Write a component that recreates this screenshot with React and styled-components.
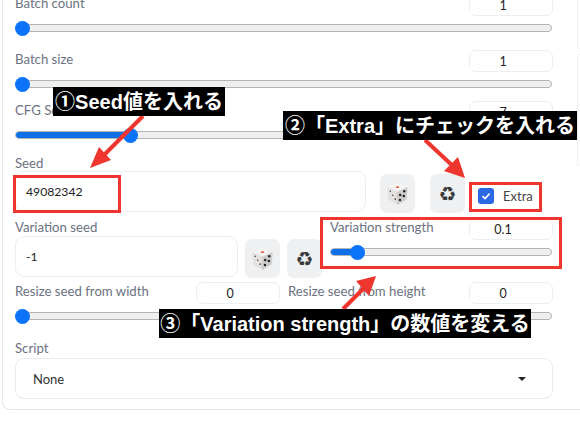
import React from 'react'
import styled, { createGlobalStyle } from 'styled-components'

const GlobalStyle = createGlobalStyle`
  * { box-sizing: border-box; }
  body {
    margin: 0;
    background: #fff;
    font-family: "Lato", "Noto Sans", sans-serif;
  }
`

const Page = styled.div`
  position: relative;
  width: 580px;
  height: 428px;
  overflow: hidden;
`
const Panel = styled.div`
  display: flex;
  margin: -10px 0 0 2px;
  height: 420px;
  padding: 4px 0 0 12px;
  border-left: 1px solid #e5e7eb;
  border-bottom: 1px solid #e5e7eb;
  border-bottom-left-radius: 8px;
`
const Main = styled.div`
  width: 538px;
  flex-shrink: 0;
`
const Side = styled.div`
  margin-left: 24px;
  flex: 1;
  display: flex;
  flex-direction: column;
  gap: 5px;
`
const SideCard = styled.div`
  height: ${p => p.$h}px;
  border: 1px solid #f0f1f3;
  border-radius: 6px 0 0 6px;
  border-right: 0;
`
const SliderHead = styled.div`
  display: flex;
  justify-content: space-between;
  align-items: flex-start;
  margin-top: ${p => p.$top || 0}px;
`
const Label = styled.div`
  margin-top: ${p => p.$top || 0}px;
  font-size: 13.2px;
  line-height: 18px;
  color: #6b7280;
  white-space: nowrap;
`
const NumberBox = styled.div`
  width: 84px;
  height: 22px;
  padding-right: 16px;
  border: 1px solid #eceef0;
  border-radius: 7px;
  background: #fff;
  text-align: center;
  font-size: 12.5px;
  line-height: 22px;
  color: #222;
`
const Track = styled.div`
  display: flex;
  height: 8px;
  margin: 8px 1px 0 0;
  border: 1px solid #b4b4b6;
  border-radius: 4px;
  background: #efeff0;
`
const Fill = styled.div`
  display: flex;
  justify-content: flex-end;
  align-items: center;
  min-width: 7px;
  height: 6px;
  border-radius: 3px;
  background: #0f6fe6;
`
const Thumb = styled.div`
  flex-shrink: 0;
  width: 15px;
  height: 15px;
  margin-right: -7px;
  border-radius: 50%;
  background: #0b74fb;
`
const TextBox = styled.div`
  width: ${p => p.$w}px;
  height: 41px;
  padding-left: 10px;
  border: 1px solid #eceef0;
  border-radius: 9px;
  font-size: 12.2px;
  line-height: 40px;
  color: #222;
`
const SeedRow = styled.div`
  display: flex;
  align-items: flex-start;
  margin-top: ${p => p.$top}px;
`
const IconButton = styled.div`
  display: flex;
  align-items: center;
  justify-content: center;
  flex-shrink: 0;
  width: 35px;
  height: 39px;
  margin-top: 3px;
  margin-left: ${p => p.$left}px;
  border-radius: 7px;
  background: #eff0f2;
  color: #3a3a3c;
  font-family: "DejaVu Sans", sans-serif;
  font-size: 20px;
`
const CheckWrap = styled.div`
  display: flex;
  align-items: center;
  height: 41px;
  margin-left: 13px;
  padding-top: 8px;
  font-size: 13px;
  color: #444;
`
const CheckBox = styled.div`
  display: flex;
  align-items: center;
  justify-content: center;
  width: 16px;
  height: 16px;
  margin-right: 9px;
  border-radius: 3px;
  background: #2a68e4;
`
const TwoCols = styled.div`
  display: grid;
  grid-template-columns: ${p => p.$cols};
  column-gap: 8px;
  margin-top: ${p => p.$top}px;
`
const Select = styled.div`
  display: flex;
  align-items: center;
  justify-content: space-between;
  height: 41px;
  margin-top: 1px;
  padding: 0 26px 0 17px;
  border: 1px solid #e9ebee;
  border-radius: 9px;
  font-size: 13px;
  color: #333;
`
const Caret = styled.div`
  width: 0;
  height: 0;
  border-left: 4px solid transparent;
  border-right: 4px solid transparent;
  border-top: 4px solid #222;
`
const Overlay = styled.svg`
  position: absolute;
  inset: 0;
`
const Callout = styled.div`
  position: absolute;
  left: ${p => p.$x}px;
  top: ${p => p.$y}px;
  width: ${p => p.$w}px;
  height: 29px;
  background: #000;
  color: #fff;
  font-family: "Liberation Sans", "Noto Sans CJK JP", sans-serif;
  font-size: 20px;
  font-weight: 700;
  line-height: 30px;
  white-space: nowrap;
  text-align: center;
`
const RedFrame = styled.div`
  position: absolute;
  left: ${p => p.$x}px;
  top: ${p => p.$y}px;
  width: ${p => p.$w}px;
  height: ${p => p.$h}px;
  border: 3px solid #ee352e;
`

const Dice = () => (
  <svg width="27" height="27" viewBox="0 0 24 24">
    <g strokeLinejoin="round" strokeWidth="1.2">
      <path d="M12 3 L20.5 7 L12 11 L3.5 7 Z" fill="#f6f4f2" stroke="#f6f4f2" />
      <path d="M3.5 7 L12 11 L12 21.5 L4.5 17 Z" fill="#e4e2e0" stroke="#e4e2e0" />
      <path d="M20.5 7 L12 11 L12 21.5 L19.5 17 Z" fill="#cfcdcb" stroke="#cfcdcb" />
    </g>
    <ellipse cx="12" cy="6.4" rx="1.6" ry="0.8" fill="#e8604c" />
    <circle cx="5.6" cy="10" r="0.7" fill="#444" />
    <circle cx="7.8" cy="13.5" r="0.7" fill="#444" />
    <circle cx="10" cy="17" r="0.7" fill="#444" />
    <circle cx="18" cy="10" r="1.1" fill="#222" />
    <circle cx="17.6" cy="14.2" r="1.1" fill="#222" />
    <circle cx="14.4" cy="13.4" r="1.1" fill="#222" />
    <circle cx="14.2" cy="17.8" r="1.1" fill="#222" />
  </svg>
)

const Slider = ({ percent }) => (
  <Track>
    <Fill style={{ width: `${percent}%` }}>
      <Thumb />
    </Fill>
  </Track>
)

const SliderField = ({ label, value, percent, top }) => (
  <div>
    <SliderHead $top={top}>
      <Label>{label}</Label>
      <NumberBox>{value}</NumberBox>
    </SliderHead>
    <Slider percent={percent} />
  </div>
)

const App = () => {
  return (
    <Page>
      <GlobalStyle />
      <Panel>
        <Main>
          <SliderField label="Batch count" value="1" percent={0} />
          <SliderField label="Batch size" value="1" percent={0} top={18} />
          <SliderField label="CFG Scale" value="7" percent={21.5} top={13} />

          <Label $top={15}>Seed</Label>
          <SeedRow $top={-1}>
            <TextBox $w={351}>49082342</TextBox>
            <IconButton $left={14}><Dice /></IconButton>
            <IconButton $left={15}>♻</IconButton>
            <CheckWrap>
              <CheckBox>
                <svg width="10" height="10" viewBox="0 0 10 10">
                  <path d="M1.5 5.2 L4 7.6 L8.6 2.6" fill="none" stroke="#fff" strokeWidth="1.6" />
                </svg>
              </CheckBox>
              Extra
            </CheckWrap>
          </SeedRow>

          <TwoCols $cols="307px 223px" $top={5}>
            <div>
              <Label>Variation seed</Label>
              <SeedRow $top={0}>
                <TextBox $w={223}>-1</TextBox>
                <IconButton $left={7}><Dice /></IconButton>
                <IconButton $left={7}>♻</IconButton>
              </SeedRow>
            </div>
            <SliderField label="Variation strength" value="0.1" percent={12.2} />
          </TwoCols>

          <TwoCols $cols="265px 265px" $top={4}>
            <SliderField label="Resize seed from width" value="0" percent={0} />
            <SliderField label="Resize seed from height" value="0" percent={0} />
          </TwoCols>

          <Label $top={19}>Script</Label>
          <Select>
            None
            <Caret />
          </Select>
        </Main>
        <Side>
          <SideCard $h={55} />
          <SideCard $h={112} />
        </Side>
      </Panel>

      <Overlay width="580" height="428" viewBox="0 0 580 428">
        <g stroke="#ee352e" strokeWidth="4">
          <line x1="143" y1="116" x2="102" y2="157" />
          <line x1="425" y1="140" x2="455" y2="168" />
          <line x1="343" y1="309" x2="366" y2="286" />
        </g>
        <g fill="#ee352e">
          <polygon points="90,168 99,147 111,160" />
          <polygon points="465,178 444,171 458,157" />
          <polygon points="376,276 356,281 369,296" />
        </g>
      </Overlay>
      <RedFrame $x={13} $y={175} $w={108} $h={38} />
      <RedFrame $x={469} $y={182} $w={73} $h={30} />
      <RedFrame $x={320} $y={217} $w={242} $h={52} />
      <Callout $x={53} $y={87} $w={172}>①Seed値を入れる</Callout>
      <Callout $x={283} $y={111} $w={294}>②「Extra」にチェックを入れる</Callout>
      <Callout $x={159} $y={309} $w={372}>③「Variation strength」の数値を変える</Callout>
    </Page>
  )
}

export default App
